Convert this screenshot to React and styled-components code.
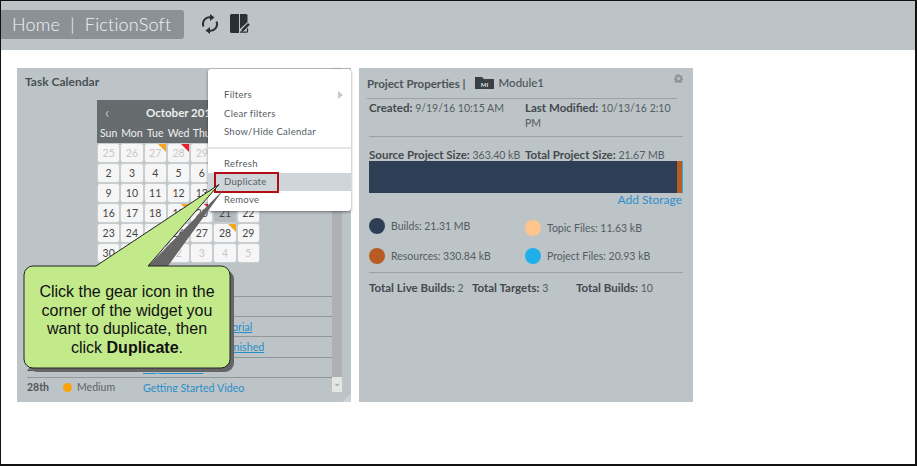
import React from 'react';
import styled, { createGlobalStyle } from 'styled-components';

const days = [
  [25, 26, 27, 28, 29, 30, 1],
  [2, 3, 4, 5, 6, 7, 8],
  [9, 10, 11, 12, 13, 14, 15],
  [16, 17, 18, 19, 20, 21, 22],
  [23, 24, 25, 26, 27, 28, 29],
  [30, 31, 1, 2, 3, 4, 5],
];
const marks = { '0-2': 'orange', '0-3': 'red', '3-3': 'orange', '3-4': 'red', '4-5': 'orange' };
const weekdays = ['Sun', 'Mon', 'Tue', 'Wed', 'Thu', 'Fri', 'Sat'];
const tasks = [
  { date: '13th', name: 'Getting Started Tutorial', underline: true },
  { date: '19th', name: 'Mark All Tasks as Finished', underline: true },
  { date: '24th', name: 'Key Features', underline: true },
  { date: '28th', name: 'Getting Started Video' },
];

export default function App() {
  return (
    <>
      <GlobalStyle />
      <Frame>
        <TopBar>
          <HomePill>Home&nbsp; |&nbsp; FictionSoft</HomePill>
          <IconButton>
            <svg width="18" height="20" viewBox="0 0 18 20" fill="none" stroke="#2b3034" strokeWidth="2">
              <path d="M2.600 12.500A6.500 6.500 0 0 1 10 3.500" />
              <path d="M15.400 7.500A6.500 6.500 0 0 1 8 16.500" />
              <path d="M9 0l4.500 3.500L9 7z" fill="#2b3034" stroke="none" />
              <path d="M9 13l-4.500 3.500L9 20z" fill="#2b3034" stroke="none" />
            </svg>
          </IconButton>
          <IconButton>
            <svg width="20" height="20" viewBox="0 0 20 20">
              <path d="M0 1.500A1.500 1.500 0 0 1 1.500 0H9v19H1.500A1.500 1.500 0 0 1 0 17.500z" fill="#2b3034" />
              <path d="M10 0h6a1.500 1.500 0 0 1 1.500 1.500V8L10 15z" fill="#2b3034" />
              <path d="M11 18.500l1-3.500 6-6 1.800 1.800-6 6z" fill="#2b3034" />
              <path d="M10 18.200h6.500a1 1 0 0 0 1-1v-3" fill="none" stroke="#2b3034" strokeWidth="1.200" />
            </svg>
          </IconButton>
        </TopBar>
        <Main>
          <CalendarWidget>
            <WidgetTitle>Task Calendar</WidgetTitle>
            <Calendar>
              <CalHead><span>‹</span><b>October 2016</b></CalHead>
              <WeekRow>{weekdays.map((d) => <span key={d}>{d}</span>)}</WeekRow>
              <DayGrid>
                {days.map((row, r) => row.map((d, c) => (
                  <Day
                    key={r + '-' + c}
                    $muted={(r === 0 && d > 20) || (r === 5 && d < 10)}
                    $active={r === 3 && c === 5}
                    $mark={marks[r + '-' + c]}
                  >
                    {d}
                  </Day>
                )))}
              </DayGrid>
            </Calendar>
            <TaskList>
              <TaskRow />
              {tasks.map((t) => (
                <TaskRow key={t.date}>
                  <TaskDate>{t.date}</TaskDate>
                  <Dot />
                  <Priority>Medium</Priority>
                  <TaskLink $underline={t.underline}>{t.name}</TaskLink>
                </TaskRow>
              ))}
            </TaskList>
            <ScrollTrack><ScrollButton>⌄</ScrollButton></ScrollTrack>
            <ResizeCorner />
            <Menu>
              <MenuItem $tall>Filters<MenuArrow /></MenuItem>
              <MenuItem $tall>Clear filters</MenuItem>
              <MenuItem $tall>Show/Hide Calendar</MenuItem>
              <MenuDivider />
              <MenuItem>Refresh</MenuItem>
              <MenuItem $active>Duplicate<RedBox /></MenuItem>
              <MenuItem>Remove</MenuItem>
            </Menu>
          </CalendarWidget>
          <PropertiesWidget>
            <PropsTitle>
              <span>Project Properties |</span>
              <svg width="19" height="12" viewBox="0 0 19 12"><path d="M0 0h7l2 2h10v10H0z" fill="#3a3f44" /><text x="9.500" y="10" fontSize="6" fill="#dfe3e5" textAnchor="middle" fontFamily="Lato">MI</text></svg>
              <strong>Module1</strong>
              <Gear viewBox="0 0 24 24"><path fillRule="evenodd" d="M10 0h4l.7 3.400 2.300 1 2.900-1.900 2.800 2.800-1.900 2.900 1 2.300 3.200.6v4l-3.200.7-1 2.300 1.900 2.900-2.800 2.800-2.900-1.900-2.300 1-.7 3.100h-4l-.7-3.100-2.300-1-2.900 1.900-2.800-2.800 1.900-2.900-1-2.300L0 14V10l3.200-.6 1-2.300-1.900-2.900 2.800-2.800 2.900 1.900 2.300-1zM12 8a4 4 0 1 0 0 8 4 4 0 0 0 0-8z" fill="#8f979c" /></Gear>
            </PropsTitle>
            <MetaGrid>
              <span><b>Created:</b> 9/19/16 10:15 AM</span>
              <span><b>Last Modified:</b> 10/13/16 2:10 PM</span>
            </MetaGrid>
            <SizeGrid>
              <span><b>Source Project Size:</b> 363.40 kB</span>
              <span><b>Total Project Size:</b> 21.67 MB</span>
            </SizeGrid>
            <StorageBar>
              <Segment $color="#2e3e55" style={{ flex: 307 }} />
              <Segment $color="#ffc48a" style={{ flex: 0.6 }} />
              <Segment $color="#b85c24" style={{ flex: 5 }} />
              <Segment $color="#29abe2" style={{ flex: 0.6 }} />
            </StorageBar>
            <AddStorage>Add Storage</AddStorage>
            <Legend>
              <LegendItem $color="#2e3e55">Builds: 21.31 MB</LegendItem>
              <LegendItem $color="#ffc48a" $shift>Topic Files: 11.63 kB</LegendItem>
              <LegendItem $color="#b85c24">Resources: 330.84 kB</LegendItem>
              <LegendItem $color="#1fb0ec">Project Files: 20.93 kB</LegendItem>
            </Legend>
            <Totals>
              <span><b>Total Live Builds:</b> 2</span>
              <span><b>Total Targets:</b> 3</span>
              <span><b>Total Builds:</b> 10</span>
            </Totals>
          </PropertiesWidget>
        </Main>
        <Callout>
          <svg width="214" height="192" viewBox="0 0 214 192">
            <path d="M125 82L201 5l-59 81h60a9 9 0 0 1 9 9v84a9 9 0 0 1-9 9H14a9 9 0 0 1-9-9V90z" fill="#666" />
            <path d="M73 82L196 .5 125 82h73a9 9 0 0 1 9 9v84a9 9 0 0 1-9 9H10a9 9 0 0 1-9-9V91a9 9 0 0 1 9-9z" fill="#c2ea8b" stroke="#222" strokeWidth="1" />
          </svg>
          <CalloutText>Click the gear icon in the corner of the widget you want to duplicate, then click <b>Duplicate</b>.</CalloutText>
        </Callout>
      </Frame>
    </>
  );
}

const GlobalStyle = createGlobalStyle`
  html, body { margin: 0; padding: 0; background: #fff; }
  * { box-sizing: border-box; }
  body { font-family: Lato, "Liberation Sans", sans-serif; }
`;

const Frame = styled.div`
  position: relative;
  width: 917px;
  height: 466px;
  border-style: solid;
  border-color: #111;
  border-width: 1px 2px 2px 1px;
  background: #fff;
  overflow: hidden;
`;

const TopBar = styled.header`
  height: 49px;
  background: #bcc4c8;
  display: flex;
  align-items: center;
  gap: 8px;
  padding-bottom: 3px;
`;

const HomePill = styled.div`
  width: 183px;
  height: 29px;
  background: #8a9298;
  border-radius: 0 3px 3px 0;
  color: #f2f4f5;
  font-size: 18px;
  font-weight: 300;
  line-height: 29px;
  padding-left: 11px;
  letter-spacing: 0.2px;
  white-space: nowrap;
  margin-right: 7px;
`;

const IconButton = styled.div`
  display: flex;
  width: 22px;
  justify-content: center;
`;

const Main = styled.main`
  display: flex;
  gap: 8px;
  padding: 18px 0 0 16px;
`;

const CalendarWidget = styled.section`
  position: relative;
  width: 334px;
  height: 334px;
  background: #bcc4c8;
  padding: 7px 0 0;
`;

const WidgetTitle = styled.div`
  font-size: 12px;
  font-weight: 700;
  color: #4a5054;
  padding-left: 8px;
  height: 25px;
  line-height: 13px;
`;

const Calendar = styled.div`
  width: 163px;
  margin-left: 80px;
`;

const CalHead = styled.div`
  height: 24px;
  background: #666c6e;
  color: #eef0f0;
  display: flex;
  align-items: center;
  font-size: 11.500px;
  span { font-size: 15px; padding-left: 8px; color: #c5c9ca; width: 49px; }
`;

const WeekRow = styled.div`
  height: 19px;
  background: #666c6e;
  color: #eef0f0;
  display: grid;
  grid-template-columns: repeat(7, 1fr);
  font-size: 10.500px;
  line-height: 19px;
  text-align: center;
`;

const DayGrid = styled.div`
  display: grid;
  grid-template-columns: repeat(7, 1fr);
  grid-auto-rows: 20px;
`;

const Day = styled.div`
  position: relative;
  background: ${(p) => (p.$active ? '#b3bbbf' : '#f6f6f6')};
  border: 1px solid #c9cdcf;
  border-radius: 3px;
  color: ${(p) => (p.$muted ? '#c8c8c8' : '#444')};
  font-size: 10.500px;
  line-height: 18px;
  text-align: center;
  &::after {
    content: '';
    display: ${(p) => (p.$mark ? 'block' : 'none')};
    position: absolute;
    top: 0;
    right: 0;
    border-style: solid;
    border-width: 0 8px 8px 0;
    border-color: transparent ${(p) => (p.$mark === 'red' ? '#e8202a' : '#f5a623')} transparent transparent;
  }
`;

const TaskList = styled.div`
  margin: 33px 19px 0 10px;
  height: 96px;
  overflow: hidden;
`;

const TaskRow = styled.div`
  height: 20.200px;
  border-top: 1px solid #8f979b;
  display: flex;
  align-items: center;
  font-size: 10.500px;
  color: #555;
`;

const TaskDate = styled.span`
  font-weight: 700;
  width: 36px;
`;

const Dot = styled.span`
  width: 9px;
  height: 9px;
  border-radius: 50%;
  background: #f9a30a;
  margin-right: 5px;
`;

const Priority = styled.span`
  width: 66px;
  color: #5c6266;
`;

const TaskLink = styled.a`
  color: #2a8fc9;
  font-size: 10.700px;
  white-space: nowrap;
  text-decoration: ${(p) => (p.$underline ? 'underline' : 'none')};
`;

const ScrollTrack = styled.div`
  position: absolute;
  left: 315px;
  top: 0;
  bottom: 10px;
  width: 10px;
  background: #aeb0b1;
`;

const ScrollButton = styled.div`
  position: absolute;
  left: 0;
  right: 0;
  bottom: 0;
  height: 15px;
  background: #e4e6e6;
  color: #999;
  font-size: 10px;
  line-height: 10px;
  text-align: center;
`;

const ResizeCorner = styled.div`
  position: absolute;
  right: 0;
  bottom: 0;
  width: 9px;
  height: 9px;
  background: linear-gradient(135deg, transparent 50%, #ccd2d5 50%);
`;

const Menu = styled.div`
  position: absolute;
  left: 191px;
  top: 1px;
  width: 143px;
  height: 142px;
  background: #fff;
  border-radius: 3px;
  box-shadow: 0 1px 3px rgba(0, 0, 0, 0.45);
  padding-top: 17px;
`;

const MenuItem = styled.div`
  position: relative;
  height: ${(p) => (p.$tall ? '18.500px' : '18px')};
  line-height: 18px;
  padding-left: 16px;
  font-size: 9.500px;
  letter-spacing: 0.3px;
  color: #555b5f;
  background: ${(p) => (p.$active ? '#ced6da' : 'transparent')};
`;

const MenuArrow = styled.i`
  position: absolute;
  right: 8px;
  top: 5px;
  border-style: solid;
  border-width: 4px 0 4px 5px;
  border-color: transparent transparent transparent #c5c9cb;
`;

const MenuDivider = styled.div`
  height: 2px;
  background: #e3e6e7;
  margin: 5px 0 6.500px;
`;

const RedBox = styled.span`
  position: absolute;
  left: 6px;
  top: -1px;
  width: 65px;
  height: 21px;
  border: 2px solid #b00d17;
`;

const PropertiesWidget = styled.section`
  width: 334px;
  height: 334px;
  background: #bcc4c8;
  padding: 0 10px;
  font-size: 10.500px;
  color: #555b5f;
  b { color: #45494d; font-size: 11.500px; }
`;

const PropsTitle = styled.div`
  position: relative;
  height: 31px;
  display: flex;
  align-items: center;
  gap: 9px;
  font-weight: 700;
  color: #4d5357;
  font-size: 11.500px;
  border-bottom: 1px solid #9aa2a6;
  margin: 0 6px 0 -2px;
  strong { font-weight: 500; margin-left: -4px; font-size: 11.500px; position: relative; top: -1px; }
`;

const Gear = styled.svg`
  position: absolute;
  right: -6px;
  top: 6px;
  width: 9px;
  height: 9px;
`;

const MetaGrid = styled.div`
  display: grid;
  grid-template-columns: 156px 1fr;
  height: 38px;
  line-height: 15px;
  border-bottom: 1px solid #9aa2a6;
  padding-top: 1px;
`;

const SizeGrid = styled.div`
  display: grid;
  grid-template-columns: 156px 1fr;
  margin-top: 11px;
  height: 13px;
  line-height: 13px;
  white-space: nowrap;
`;

const StorageBar = styled.div`
  display: flex;
  height: 32px;
`;

const Segment = styled.div`
  background: ${(p) => p.$color};
`;

const AddStorage = styled.div`
  text-align: right;
  color: #2f8fcb;
  font-size: 12px;
  line-height: 14px;
  padding-right: 1px;
`;

const Legend = styled.div`
  display: grid;
  grid-template-columns: 156px 1fr;
  grid-auto-rows: 30px;
  margin-top: 4px;
  font-size: 10.500px;
`;

const LegendItem = styled.div`
  display: flex;
  align-items: center;
  gap: 6px;
  position: relative;
  top: ${(p) => (p.$shift ? '2px' : '0')};
  &::before {
    content: '';
    width: 16px;
    height: 16px;
    border-radius: 50%;
    background: ${(p) => p.$color};
  }
`;

const Totals = styled.div`
  display: grid;
  grid-template-columns: 103px 104px 1fr;
  border-top: 1px solid #9aa2a6;
  margin-top: 1px;
  padding-top: 8px;
  line-height: 14px;
`;

const Callout = styled.aside`
  position: absolute;
  left: 22px;
  top: 183px;
  width: 214px;
  height: 192px;
  svg { display: block; }
`;

const CalloutText = styled.div`
  position: absolute;
  left: 13px;
  top: 99px;
  width: 182px;
  text-align: center;
  color: #111;
  font-family: "Liberation Sans", Arial, sans-serif;
  font-size: 16px;
  line-height: 18.500px;
`;
